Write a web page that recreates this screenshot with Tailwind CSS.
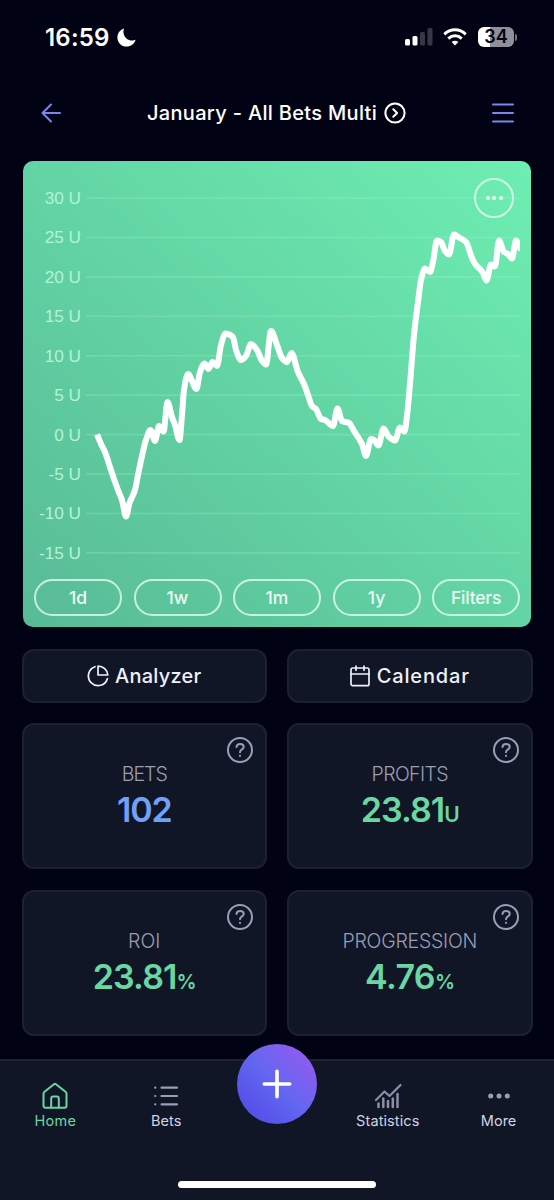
<!DOCTYPE html>
<html lang="en">
<head>
    <meta charset="UTF-8">
    <meta name="viewport" content="width=device-width, initial-scale=1.0">
    <title>January - All Bets Multi</title>
    <script src="https://cdn.jsdelivr.net/npm/@tailwindcss/browser@4"></script>
</head>
<body class="bg-[#010314] text-white font-['Inter',sans-serif]">
    <div class="flex flex-col h-[1200px] w-[554px] overflow-hidden">

        <!-- Status bar -->
        <div class="h-[74px] shrink-0 flex items-center justify-between pl-[45px] pr-[37px]">
            <div class="flex items-center gap-[7px]">
                <span class="text-[24px] leading-none font-semibold tracking-[0.2px] pt-px">16:59</span>
                <svg class="w-[19px] h-[19px]" viewBox="0 0 19 19" fill="white">
                    <path d="M7.2.5C6.4 2 6.2 3.7 6.6 5.5c.9 4.300 4.600 7.200 8.700 7.100 1.200 0 2.300-.3 3.300-.8C17.400 15.800 13.900 18.600 9.600 18.600 4.500 18.600.4 14.500.4 9.400.4 5.200 3.200 1.600 7.200.5Z"/>
                </svg>
            </div>
            <div class="flex items-center gap-[11px]">
                <svg class="w-7 h-[18px] -mr-px" viewBox="0 0 28 18" fill="white">
                    <rect x="0" y="11" width="5" height="6.500" rx="1.500"/>
                    <rect x="7.500" y="8" width="5" height="9.500" rx="1.500"/>
                    <rect x="15" y="4" width="5" height="13.500" rx="1.500" fill="#353744"/>
                    <rect x="22.500" y="0" width="5" height="17.500" rx="1.500" fill="#353744"/>
                </svg>
                <svg class="w-6 h-[18px]" viewBox="0 0 24 18" fill="none" stroke="white" stroke-width="3">
                    <path d="M1.300 6.400C7.400.3 16.600.3 22.700 6.400"/>
                    <path d="M5.300 10.600c3.900-3.700 9.500-3.700 13.400 0"/>
                    <path d="M12 17.400 8.600 14c1.900-1.700 4.900-1.700 6.800 0Z" fill="white" stroke="none"/>
                </svg>
                <div class="flex items-center gap-px">
                    <div class="w-9 h-5 rounded-[6px] bg-linear-to-r from-white from-34% to-[#8e8f98] to-34% flex items-center justify-center text-[18px] leading-none font-semibold text-[#010314]">34</div>
                    <div class="w-[2px] h-[7px] rounded-r-full bg-[#73747e]"></div>
                </div>
            </div>
        </div>

        <!-- Page header -->
        <header class="h-[77px] shrink-0 flex items-center justify-between pl-[41px] pr-10">
            <svg class="w-5 h-5" viewBox="0 0 20 20" fill="none" stroke="#7f83ee" stroke-width="2" stroke-linecap="round" stroke-linejoin="round">
                <path d="M10 1.500 1.500 10l8.500 8.500M1.500 10H19"/>
            </svg>
            <div class="flex items-center gap-[7px]">
                <h1 class="text-[20px] leading-none font-medium tracking-[0.32px] whitespace-nowrap">January - All Bets Multi</h1>
                <svg class="w-[22px] h-[22px]" viewBox="0 0 22 22" fill="none" stroke="white" stroke-width="2" stroke-linecap="round" stroke-linejoin="round">
                    <circle cx="11" cy="11" r="9.600"/>
                    <path d="m9.300 7.200 3.800 3.800-3.800 3.800"/>
                </svg>
            </div>
            <svg class="w-[22px] h-5" viewBox="0 0 22 20" fill="none" stroke="#7f83ee" stroke-width="2" stroke-linecap="round">
                <path d="M1 1.500h20M1 10h20M1 18.500h20"/>
            </svg>
        </header>

        <main class="px-[21.5px] pt-[10px]">
            <!-- Profit chart -->
            <section class="relative mx-[1.5px] h-[466px] w-[508px] rounded-[10px] bg-linear-to-tr from-[#58bb96] to-[#6eeeb2] flex flex-col justify-end overflow-hidden">
                <svg class="w-[508px] h-[418px] shrink-0" viewBox="23 161 508 418" fill="none">
                    <clipPath id="plot"><rect x="86" y="161" width="434" height="418"/></clipPath>
                    <g id="grid"></g>
                    <path id="line" clip-path="url(#plot)" stroke="white" stroke-width="6" stroke-linejoin="round"/>
                </svg>
                <div class="grid grid-cols-5 gap-[11.5px] px-[11px] pb-[11px] text-[17.5px] leading-none font-medium text-[#ecfff6]">
                    <button class="h-[37px] rounded-full border-2 border-[#ecfff6]/75">1d</button>
                    <button class="h-[37px] rounded-full border-2 border-[#ecfff6]/75">1w</button>
                    <button class="h-[37px] rounded-full border-2 border-[#ecfff6]/75">1m</button>
                    <button class="h-[37px] rounded-full border-2 border-[#ecfff6]/75">1y</button>
                    <button class="h-[37px] rounded-full border-2 border-[#ecfff6]/75 tracking-[-0.2px]">Filters</button>
                </div>
                <button class="absolute top-[17px] right-[17px] w-10 h-10 rounded-full border-2 border-[#ecfff6]/75 flex items-center justify-center gap-[2.5px]">
                    <span class="w-1 h-1 rounded-full bg-[#ecfff6]"></span>
                    <span class="w-1 h-1 rounded-full bg-[#ecfff6]"></span>
                    <span class="w-1 h-1 rounded-full bg-[#ecfff6]"></span>
                </button>
            </section>

            <div class="mt-[22px] grid grid-cols-2 gap-5">
                <button class="h-[54px] rounded-xl border-2 border-[#1c2031] bg-[#111627] flex items-center justify-center gap-[6px] text-[20px] font-medium tracking-[0.25px] text-[#eef0fa]">
                    <svg class="w-[22px] h-[22px]" viewBox="0 0 22 22" fill="none" stroke="currentColor" stroke-width="1.700" stroke-linecap="round" stroke-linejoin="round">
                        <path d="M11 1.200V10h9.800A9.800 9.400 0 0 0 11 1.200Z"/>
                        <path d="M8 1.700a9.700 9.700 0 1 0 12.400 12"/>
                    </svg>
                    Analyzer
                </button>
                <button class="h-[54px] rounded-xl border-2 border-[#1c2031] bg-[#111627] flex items-center justify-center gap-[7px] text-[20px] font-medium tracking-[0.85px] text-[#eef0fa]">
                    <svg class="w-5 h-[22px]" viewBox="0 0 20 22" fill="none" stroke="currentColor" stroke-width="1.700" stroke-linecap="round" stroke-linejoin="round">
                        <rect x="1" y="3" width="18" height="17.700" rx="1.800"/>
                        <path d="M1 9h18M6 1v4.200M14 1v4.200"/>
                    </svg>
                    Calendar
                </button>
            </div>

            <!-- Stat cards -->
            <div class="mt-5 grid grid-cols-2 gap-x-5 gap-y-[21px]">
                <div class="relative h-[146px] rounded-xl border-2 border-[#1c2031] bg-[#111627] flex flex-col items-center pt-[39px]">
                    <div class="text-[19.5px] leading-5 font-light text-[#9a9eb4] tracking-[-1px]">BETS</div>
                    <div class="mt-[6px] text-[34px] leading-10 font-semibold text-[#70a1f7] tracking-[-1.2px]">102</div>
                    <svg class="absolute top-3 right-3 w-[26px] h-[26px]" viewBox="0 0 26 26" fill="none" stroke="#9a9eb4" stroke-width="2" stroke-linecap="round"><circle cx="13" cy="13" r="12"/><path d="M9.500 10c.3-4 7.200-3.900 7.200 0 0 2.600-3.700 2.200-3.700 5.200M13 18.700v.2"/></svg>
                </div>
                <div class="relative h-[146px] rounded-xl border-2 border-[#1c2031] bg-[#111627] flex flex-col items-center pt-[39px]">
                    <div class="text-[19.5px] leading-5 font-light text-[#9a9eb4] tracking-[-0.6px]">PROFITS</div>
                    <div class="mt-[6px] text-[34px] leading-10 font-semibold text-[#6bd6a1] tracking-[-0.9px]">23.81<span class="text-[21px]">U</span></div>
                    <svg class="absolute top-3 right-3 w-[26px] h-[26px]" viewBox="0 0 26 26" fill="none" stroke="#9a9eb4" stroke-width="2" stroke-linecap="round"><circle cx="13" cy="13" r="12"/><path d="M9.500 10c.3-4 7.200-3.900 7.200 0 0 2.600-3.700 2.200-3.700 5.200M13 18.700v.2"/></svg>
                </div>
                <div class="relative h-[146px] rounded-xl border-2 border-[#1c2031] bg-[#111627] flex flex-col items-center pt-[39px]">
                    <div class="text-[19.5px] leading-5 font-light text-[#9a9eb4]">ROI</div>
                    <div class="mt-[6px] text-[34px] leading-10 font-semibold text-[#6bd6a1] tracking-[-0.9px]">23.81<span class="text-[20px]">%</span></div>
                    <svg class="absolute top-3 right-3 w-[26px] h-[26px]" viewBox="0 0 26 26" fill="none" stroke="#9a9eb4" stroke-width="2" stroke-linecap="round"><circle cx="13" cy="13" r="12"/><path d="M9.500 10c.3-4 7.200-3.900 7.200 0 0 2.600-3.700 2.200-3.700 5.200M13 18.700v.2"/></svg>
                </div>
                <div class="relative h-[146px] rounded-xl border-2 border-[#1c2031] bg-[#111627] flex flex-col items-center pt-[39px]">
                    <div class="text-[19.5px] leading-5 font-light text-[#9a9eb4] tracking-[-0.25px]">PROGRESSION</div>
                    <div class="mt-[6px] text-[34px] leading-10 font-semibold text-[#6bd6a1] tracking-[-0.6px]">4.76<span class="text-[20px]">%</span></div>
                    <svg class="absolute top-3 right-3 w-[26px] h-[26px]" viewBox="0 0 26 26" fill="none" stroke="#9a9eb4" stroke-width="2" stroke-linecap="round"><circle cx="13" cy="13" r="12"/><path d="M9.500 10c.3-4 7.200-3.900 7.200 0 0 2.600-3.700 2.200-3.700 5.200M13 18.700v.2"/></svg>
                </div>
            </div>
        </main>

        <!-- Bottom navigation -->
        <nav class="relative mt-auto h-[141px] shrink-0 border-t-2 border-[#1e2232] bg-[#111627] flex flex-col justify-between items-center pb-3">
            <div class="w-full grid grid-cols-5 pt-[21px] text-[14.5px] leading-5 text-[#d0d3e4]">
                <a class="flex flex-col items-center gap-px tracking-[0.3px] text-[#6bd6a1]">
                    <svg class="w-[26px] h-7" viewBox="0 0 26 28" fill="none" stroke="currentColor" stroke-width="2" stroke-linecap="round" stroke-linejoin="round">
                        <path d="M1.500 11.800c0-.8.4-1.500 1-2L12 2.300a1.600 1.600 0 0 1 2 0l9.500 7.500c.6.500 1 1.200 1 2V24a1.800 1.800 0 0 1-1.800 1.800H3.300A1.800 1.800 0 0 1 1.500 24Z"/>
                        <path d="M9.200 25.500v-9a2 2 0 0 1 2-2h3.600a2 2 0 0 1 2 2v9"/>
                    </svg>
                    Home
                </a>
                <a class="flex flex-col items-center gap-px">
                    <svg class="w-[26px] h-7" viewBox="0 0 26 28" fill="none" stroke="#9a9eb4" stroke-width="2.200" stroke-linecap="round">
                        <path d="M8.500 5.700h15.500M8.500 14h15.500M8.500 22.300h15.500M2.200 5.700h.1M2.200 14h.1M2.200 22.300h.1"/>
                    </svg>
                    Bets
                </a>
                <span></span>
                <a class="flex flex-col items-center gap-px tracking-[0.1px]">
                    <svg class="w-7 h-7" viewBox="0 0 28 28" fill="none" stroke="#8b8fa3" stroke-width="2.200" stroke-linecap="round" stroke-linejoin="round">
                        <path d="m2 18 8.500-8.500 5 4.500L26.500 3"/>
                        <path d="M4.500 21.500v3.500M9.300 16.500V25M14 19v6M18.800 16.500V25M23.500 12v13" stroke-width="2.500"/>
                    </svg>
                    Statistics
                </a>
                <a class="flex flex-col items-center gap-px">
                    <svg class="w-[26px] h-7" viewBox="0 0 26 28" fill="#9a9eb4">
                        <circle cx="4.700" cy="14" r="2.500"/><circle cx="13" cy="14" r="2.500"/><circle cx="21.300" cy="14" r="2.500"/>
                    </svg>
                    More
                </a>
            </div>
            <div class="w-[198px] h-[7px] rounded-full bg-white"></div>
            <button class="absolute -top-[17.5px] left-[237px] w-20 h-20 rounded-full bg-linear-to-tr from-[#4f46e5] via-[#6366f1] to-[#9b56ee] flex items-center justify-center">
                <svg class="w-[30px] h-[30px]" viewBox="0 0 30 30" stroke="white" stroke-width="3.600" stroke-linecap="round"><path d="M15 2.300v25.400M2.300 15h25.400"/></svg>
            </button>
        </nav>
    </div>

    <script>
        const ticks = [30, 25, 20, 15, 10, 5, 0, -5, -10, -15];
        const points = [
            [97, 434.5], [101, 444], [105, 452], [110, 467], [114, 479], [118, 490], [122, 500], [126, 516.5],
            [129.5, 503], [135, 490], [138, 475], [142, 456], [146, 440], [150.5, 430], [155, 441], [159, 426],
            [163.5, 431.5], [167.5, 402], [172, 417], [175, 425], [179.5, 440], [182, 415], [184, 390], [188, 374],
            [196.5, 389], [200, 372], [204.5, 363.5], [208.5, 369], [212.5, 362], [217, 366], [221, 345], [225.5, 333.5],
            [233, 337], [236, 350], [241, 360], [246, 356], [251, 344], [257, 350], [262, 361], [266, 364.5],
            [271, 331], [277, 345], [282, 358], [287, 362], [291.5, 353], [298, 372], [304, 384], [308, 395],
            [312, 406], [316, 409], [321, 419], [325, 420], [333, 426], [337.5, 408.5], [342, 421], [349, 423],
            [354, 431], [362, 444], [366, 456], [371, 439], [374, 440], [378.5, 445.5], [383.5, 428.5], [389, 437],
            [395, 440.5], [400, 427.5], [404.5, 431.5], [407, 416], [410, 384], [414, 335], [418, 302], [421, 280],
            [425, 268.5], [430, 272], [433, 262], [437, 240.5], [441, 242], [445, 251], [449, 254.5], [454, 234.5],
            [459, 237.5], [466, 242], [472, 258], [475, 264], [480, 269], [483, 273], [486.5, 280.5], [491, 264.5],
            [495, 266.5], [499, 240.5], [504, 252], [508, 254], [512, 258.5], [516, 240.5], [521, 250]
        ];

        document.getElementById('grid').innerHTML = ticks.map((t, i) => {
            const y = 198 + i * 39.43;
            return `<line x1="86" x2="520" y1="${y}" y2="${y}" stroke="#a5f7d0" stroke-opacity=".26" stroke-width="1.6"/>
                <text x="81" y="${y + 6}" text-anchor="end" font-family="Liberation Sans, sans-serif" font-size="17.2" fill="#b4f3d6">${t} U</text>`;
        }).join('');

        // Monotone cubic through the points, flat at every peak and dip
        const slope = (a, b) => (b[1] - a[1]) / (b[0] - a[0]);
        const m = points.map((p, i) => {
            if (i === 0) return slope(p, points[1]);
            if (i === points.length - 1) return slope(points[i - 1], p);
            const s0 = slope(points[i - 1], p);
            const s1 = slope(p, points[i + 1]);
            return s0 * s1 <= 0 ? 0 : 2 * s0 * s1 / (s0 + s1);
        });
        let d = `M${points[0]}`;
        for (let i = 1; i < points.length; i++) {
            const [x0, y0] = points[i - 1];
            const [x1, y1] = points[i];
            const h = (x1 - x0) / 3;
            d += `C${x0 + h},${y0 + m[i - 1] * h} ${x1 - h},${y1 - m[i] * h} ${x1},${y1}`;
        }
        document.getElementById('line').setAttribute('d', d);
    </script>
</body>
</html>
